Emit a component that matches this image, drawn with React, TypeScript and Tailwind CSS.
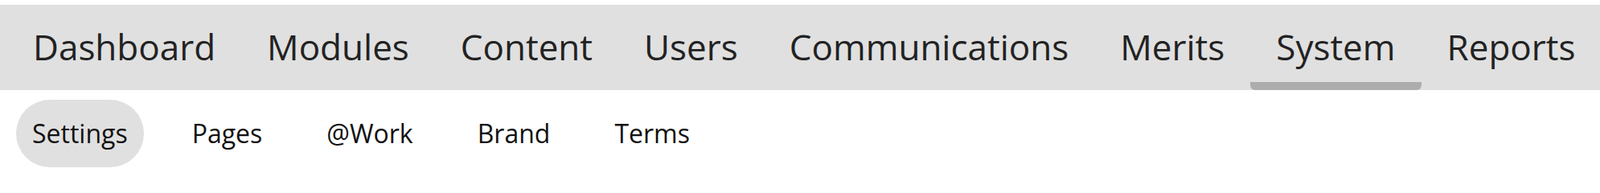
import React from "react";

const top = ["Dashboard", "Modules", "Content", "Users", "Communications", "Merits", "System", "Reports"];
const sub = ["Settings", "Pages", "@Work", "Brand", "Terms"];

export default function App() {
  return (
    <div className="w-[1990px] h-[226px] bg-white pt-[6px] font-['Open_Sans',sans-serif] overflow-hidden">
      <nav className="h-[106px] bg-[#e0e0e0] flex items-stretch pl-[9px]">
        {top.map((t) => (
          <div key={t} className="relative flex items-center px-[32px] pb-[2px]">
            <span className="text-[44px] leading-normal text-[#222222] whitespace-nowrap">{t}</span>
            {t === "System" && (
              <div className="absolute left-0 right-0 bottom-0 h-[10px] bg-[#adadad] rounded-b-[6px]" />
            )}
          </div>
        ))}
      </nav>
      <div className="flex items-center gap-[40px] pl-[20px] mt-[12px]">
        {sub.map((s) => (
          <div
            key={s}
            className={`h-[84px] flex items-center px-[20px] rounded-full ${s === "Settings" ? "bg-[#e0e0e0]" : ""}`}
          >
            <span className="text-[32px] leading-normal text-[#111111] whitespace-nowrap">{s}</span>
          </div>
        ))}
      </div>
    </div>
  );
}
